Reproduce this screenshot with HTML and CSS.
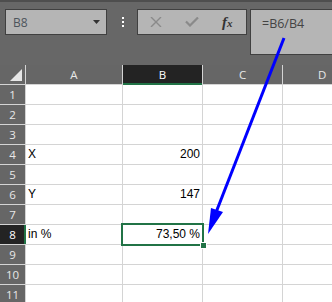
FILE: index.html
```html
<!DOCTYPE html>
<html lang="en">
<head>
    <meta charset="UTF-8">
    <title>Sheet</title>
    <link rel="stylesheet" href="styles.css">
</head>
<body>
    <div class="toolbar">
        <div class="namebox">
            <span>B8</span>
            <svg class="caret" width="7" height="4" viewBox="0 0 7 4"><path d="M0 0H7L3.5 4Z"/></svg>
        </div>
        <div class="grip"><i></i><i></i><i></i></div>
        <div class="buttons">
            <svg class="cancel" width="12" height="10" viewBox="0 0 12 10"><path d="M1 0L11 10M11 0L1 10"/></svg>
            <svg class="enter" width="14" height="10" viewBox="0 0 14 10"><path d="M1 4.5L5 8.5L13 0.5"/></svg>
            <span class="fx">f<small>x</small></span>
        </div>
        <div class="formula">=B6/B4</div>
    </div>

    <div class="sheet">
        <div class="head corner"><svg width="25" height="19" viewBox="0 0 25 19"><polygon points="10,16 22,16 22,4"/></svg></div>
        <div class="head">A</div>
        <div class="head active-col">B</div>
        <div class="head">C</div>
        <div class="head cut">D</div>

        <div class="head">1</div><div class="cell"></div><div class="cell"></div><div class="cell"></div><div class="cell"></div>
        <div class="head">2</div><div class="cell"></div><div class="cell"></div><div class="cell"></div><div class="cell"></div>
        <div class="head">3</div><div class="cell"></div><div class="cell"></div><div class="cell"></div><div class="cell"></div>
        <div class="head">4</div><div class="cell">X</div><div class="cell num">200</div><div class="cell"></div><div class="cell"></div>
        <div class="head">5</div><div class="cell"></div><div class="cell"></div><div class="cell"></div><div class="cell"></div>
        <div class="head">6</div><div class="cell">Y</div><div class="cell num">147</div><div class="cell"></div><div class="cell"></div>
        <div class="head">7</div><div class="cell"></div><div class="cell"></div><div class="cell"></div><div class="cell"></div>
        <div class="head active-row">8</div><div class="cell">in %</div>
        <div class="cell num selected">73,50 %<span class="sel-border"></span><span class="handle"></span></div>
        <div class="cell"></div><div class="cell"></div>
        <div class="head">9</div><div class="cell"></div><div class="cell"></div><div class="cell"></div><div class="cell"></div>
        <div class="head">10</div><div class="cell"></div><div class="cell"></div><div class="cell"></div><div class="cell"></div>
        <div class="head">11</div><div class="cell"></div><div class="cell"></div><div class="cell"></div><div class="cell"></div>
    </div>

    <svg class="arrow" width="332" height="302" viewBox="0 0 332 302">
        <line x1="284" y1="38" x2="215" y2="215"/>
        <polygon points="211,208 223,212 208,234"/>
    </svg>
</body>
</html>
```

FILE: styles.css
```css
html, body {
    margin: 0;
    padding: 0;
}
body {
    width: 332px;
    height: 302px;
    overflow: hidden;
    background-color: #666;
    font-family: 'Open Sans', sans-serif;
    position: relative;
}
.toolbar {
    display: flex;
    align-items: flex-start;
    height: 65px;
    box-sizing: border-box;
    border-top: 2px solid #4e4e4e;
    padding-top: 7px;
    background-color: #676767;
}
.namebox {
    display: flex;
    align-items: center;
    justify-content: space-between;
    width: 102px;
    height: 26px;
    box-sizing: border-box;
    margin-left: 5px;
    padding: 0 6px 0 7px;
    border: 1px solid #404040;
    background-color: #b5b5b5;
    color: #4d545c;
    font-size: 12px;
}
.caret {
    fill: #333;
}
.grip {
    display: flex;
    flex-direction: column;
    gap: 2px;
    margin: 8px 0 0 15px;
}
.grip i {
    display: block;
    width: 2px;
    height: 2px;
    background-color: #fff;
}
.buttons {
    display: flex;
    align-items: center;
    width: 110px;
    height: 26px;
    box-sizing: border-box;
    margin-left: 13px;
    padding-left: 12px;
    border: 1px solid #404040;
    background-color: #b5b5b5;
}
.cancel, .enter {
    fill: none;
    stroke: #8a8a8a;
}
.cancel {
    stroke-width: 1.4;
}
.enter {
    margin-left: 23px;
    stroke-width: 2.2;
}
.fx {
    margin-left: 23px;
    font-family: 'Liberation Serif', serif;
    font-style: italic;
    font-weight: bold;
    font-size: 15px;
    color: #333;
    line-height: 1;
}
.fx small {
    font-size: 11px;
}
.formula {
    flex: 1;
    min-width: 0;
    height: 46px;
    box-sizing: border-box;
    margin-left: 3px;
    padding: 5px 0 0 11px;
    border: 1px solid #404040;
    border-right: none;
    background-color: #b5b5b5;
    color: #444;
    font-size: 12.5px;
    line-height: 17px;
}
.sheet {
    display: grid;
    grid-template-columns: 25px 96px 79px 79px 1fr;
    grid-auto-rows: 19px;
    gap: 1px;
    background-color: #d4d4d4;
}
.head {
    background-color: #666;
    color: #e8e8e8;
    font-size: 11.5px;
    line-height: 19px;
    text-align: center;
}
.head.cut {
    text-align: left;
    padding-left: 35px;
}
.corner svg {
    display: block;
    fill: #e6e6e6;
}
.active-col {
    background-color: #232323;
    color: #fff;
    box-shadow: inset 0 -1px 0 #217346, 0 1px 0 #217346;
}
.active-row {
    background-color: #232323;
    color: #fff;
    box-shadow: inset -1px 0 0 #217346, 1px 0 0 #217346;
}
.cell {
    background-color: #fff;
    padding: 0 2px;
    font-family: 'Liberation Sans', sans-serif;
    font-size: 12px;
    line-height: 19px;
    color: #000;
    white-space: nowrap;
}
.num {
    text-align: right;
}
.selected {
    position: relative;
}
.sel-border {
    position: absolute;
    top: -2px;
    left: -2px;
    right: -2px;
    bottom: -2px;
    border: 2px solid #217346;
}
.handle {
    position: absolute;
    right: -4px;
    bottom: -4px;
    width: 5px;
    height: 5px;
    background-color: #217346;
    box-shadow: 0 0 0 1px #fff;
}
.arrow {
    position: absolute;
    top: 0;
    left: 0;
    pointer-events: none;
}
.arrow line {
    stroke: #0000ff;
    stroke-width: 3;
}
.arrow polygon {
    fill: #0000ff;
}
```
